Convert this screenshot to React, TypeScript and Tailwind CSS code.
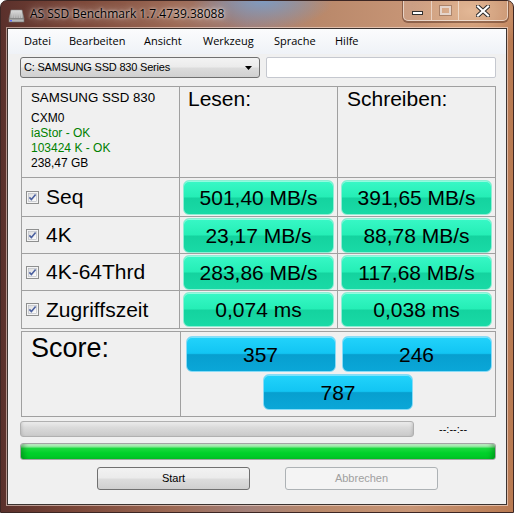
import React from 'react';

const ARIAL = "font-['Liberation_Sans',Arial,sans-serif]";
const UI = "font-['Open_Sans','Noto_Sans',sans-serif]";

const TONES = {
  green:
    "border-[#8eeed4] bg-[linear-gradient(180deg,#38f8c6_0%,#25eeb6_48%,#14d39f_52%,#19daa6_100%)] shadow-[inset_0_1px_0_rgba(255,255,255,0.45)]",
  blue:
    "border-[#88dbf6] bg-[linear-gradient(180deg,#22d3fb_0%,#12c5f3_48%,#079fcf_52%,#0aa7d8_100%)] shadow-[inset_0_1px_0_rgba(255,255,255,0.4)]",
};

const ResultBox: React.FC<{ value: string; tone: 'green' | 'blue'; className?: string }> = ({ value, tone, className }) => (
  <div
    className={`flex items-center justify-center rounded-[6px] border text-[21px] text-black ${ARIAL} ${TONES[tone]} ${className ?? ''}`}
  >
    <span className="pt-[1px]">{value}</span>
  </div>
);

const CheckBox: React.FC = () => (
  <svg width="13" height="13" viewBox="0 0 13 13" className="shrink-0">
    <defs>
      <linearGradient id="cb" x1="0" y1="0" x2="1" y2="1">
        <stop offset="0" stopColor="#dcdcdc" />
        <stop offset="1" stopColor="#ffffff" />
      </linearGradient>
    </defs>
    <rect x="0.5" y="0.5" width="12" height="12" fill="#f4f4f4" stroke="#8e8f8f" />
    <rect x="2.5" y="2.5" width="8" height="8" fill="url(#cb)" stroke="#b5b8c0" strokeWidth="0.6" />
    <path d="M3.4 6.4 L5.4 8.6 L9.6 3.6" fill="none" stroke="#4c61a0" strokeWidth="1.6" />
  </svg>
);

const DriveIcon: React.FC = () => (
  <svg width="17" height="16" viewBox="0 0 17 16">
    <defs>
      <linearGradient id="dv" x1="0" y1="0" x2="0" y2="1">
        <stop offset="0" stopColor="#e8e8e8" />
        <stop offset="1" stopColor="#9a9a9a" />
      </linearGradient>
    </defs>
    <path d="M3 2 H14 L16 11 H1 Z" fill="url(#dv)" stroke="#7a7a7a" strokeWidth="0.6" />
    <rect x="1" y="11" width="15" height="3" fill="#b8b8b8" stroke="#707070" strokeWidth="0.6" />
    <path d="M5 3 L4 10 M7 3 L6.6 10 M9 3 L9 10 M11 3 L11.6 10 M13 3 L13.6 10" stroke="#c8c8c8" strokeWidth="0.8" />
    <rect x="2" y="12" width="2" height="1.4" fill="#5a6cff" />
  </svg>
);

const rows = [
  { label: 'Seq', read: '501,40 MB/s', write: '391,65 MB/s', h: 'h-[39px]' },
  { label: '4K', read: '23,17 MB/s', write: '88,78 MB/s', h: 'h-[37px]' },
  { label: '4K-64Thrd', read: '283,86 MB/s', write: '117,68 MB/s', h: 'h-[37px]' },
  { label: 'Zugriffszeit', read: '0,074 ms', write: '0,038 ms', h: 'h-[38px]' },
];

const menu = [
  { label: 'Datei', w: 'w-[45px]' },
  { label: 'Bearbeiten', w: 'w-[75px]' },
  { label: 'Ansicht', w: 'w-[59px]' },
  { label: 'Werkzeug', w: 'w-[71px]' },
  { label: 'Sprache', w: 'w-[61px]' },
  { label: 'Hilfe', w: 'w-[40px]' },
];

export default function App() {
  return (
    <div className="flex h-[513px] w-[514px] flex-col overflow-hidden rounded-t-[7px] border border-[#3c2623] bg-[radial-gradient(ellipse_70px_28px_at_262px_0px,#7f9bc0,rgba(127,155,192,0)),radial-gradient(ellipse_60px_40px_at_470px_10px,#e0b08a,rgba(224,176,138,0)),linear-gradient(90deg,#5a302b_0%,#7a4638_14%,#9d6a55_34%,#a27f78_48%,#b9886a_62%,#c79576_80%,#b97a52_100%)]">
      {/* title bar */}
      <div className="flex h-[27px] shrink-0 items-start">
        <div className="mt-[7px] ml-[7px]">
          <DriveIcon />
        </div>
        <div className={`mt-[5px] ml-[5px] text-[12px] leading-[16px] text-black ${UI} [text-shadow:0_0_8px_rgba(255,255,255,0.9),0_0_3px_rgba(255,255,255,0.9)]`}>
          AS SSD Benchmark 1.7.4739.38088
        </div>
        <div className="mr-[5px] ml-auto flex h-[20px] rounded-b-[5px] border border-t-0 border-[rgba(255,255,255,0.55)] bg-[rgba(255,255,255,0.1)] shadow-[0_1px_0_1px_rgba(70,35,25,0.45)]">
          <div className="flex w-[28px] items-center justify-center border-r border-[rgba(255,255,255,0.5)]">
            <div className="mt-[4px] h-[4px] w-[11px] border border-[#33302e] bg-white" />
          </div>
          <div className="flex w-[27px] items-center justify-center border-r border-[rgba(255,255,255,0.5)]">
            <div className="h-[9px] w-[11px] border-2 border-[rgba(230,220,215,0.85)] shadow-[0_0_0_1px_rgba(90,60,50,0.35)]" />
          </div>
          <div className="flex w-[48px] items-center justify-center">
            <svg width="14" height="12" viewBox="0 0 14 12">
              <path d="M2 1.5 L12 10.5 M12 1.5 L2 10.5" stroke="#2f2d2c" strokeWidth="4.2" strokeLinecap="square" />
              <path d="M2 1.5 L12 10.5 M12 1.5 L2 10.5" stroke="#ffffff" strokeWidth="2.2" strokeLinecap="square" />
            </svg>
          </div>
        </div>
      </div>

      {/* client area */}
      <div className="mx-[6px] flex h-[477px] shrink-0 flex-col border border-[#3b3330] bg-[#f0f0f0] shadow-[0_0_0_1px_rgba(255,235,225,0.55)]">
        {/* menu */}
        <div className={`flex h-[25px] shrink-0 items-center bg-[linear-gradient(180deg,#fbfcfd,#eff2f7)] pl-[16px] text-[11px] text-black ${UI}`}>
          {menu.map((m) => (
            <div key={m.label} className={m.w}>
              {m.label}
            </div>
          ))}
        </div>

        {/* drive selection */}
        <div className="mt-[3px] flex h-[21px] shrink-0 pl-[12px]">
          <div className={`flex w-[240px] items-center rounded-[3px] border border-[#707070] bg-[linear-gradient(180deg,#f3f3f3_0%,#ebebeb_48%,#dcdcdc_52%,#d0d0d0_100%)] pl-[3px] text-[11px] text-black ${ARIAL}`}>
            <span className="tracking-[-0.2px]">C: SAMSUNG SSD 830 Series</span>
            <svg width="8" height="4" viewBox="0 0 8 4" className="mr-[6px] ml-auto">
              <path d="M0 0 H7 L3.5 4 Z" fill="#000" />
            </svg>
          </div>
          <div className="ml-[6px] w-[230px] rounded-[2px] border border-[#c5c8cf] bg-white" />
        </div>

        {/* results table */}
        <div className={`mt-[8px] ml-[13px] w-[475px] shrink-0 border-t border-l border-[#a0a0a0] ${ARIAL}`}>
          <div className="flex h-[91px]">
            <div className="w-[158px] border-r border-b border-[#a0a0a0] pt-[3px] pl-[9px] text-black">
              <div className="mb-[6px] text-[13.3px] leading-[15px]">SAMSUNG SSD 830</div>
              <div className="text-[12px] leading-[15px]">CXM0</div>
              <div className="text-[12px] leading-[15px] text-[#008000]">iaStor - OK</div>
              <div className="text-[12px] leading-[15px] text-[#008000]">103424 K - OK</div>
              <div className="text-[12px] leading-[15px]">238,47 GB</div>
            </div>
            <div className="w-[158px] border-r border-b border-[#a0a0a0] pl-[8px] text-[21px] leading-[24px] text-black">
              Lesen:
            </div>
            <div className="w-[158px] border-r border-b border-[#a0a0a0] pl-[9px] text-[21px] leading-[24px] text-black">
              Schreiben:
            </div>
          </div>
          {rows.map((r) => (
            <div key={r.label} className={`flex ${r.h}`}>
              <div className="flex w-[158px] items-center gap-[7px] border-r border-b border-[#a0a0a0] pl-[4px] text-[21px] text-black">
                <CheckBox />
                <span>{r.label}</span>
              </div>
              <div className="flex w-[158px] items-center border-r border-b border-[#a0a0a0] px-[3px]">
                <ResultBox value={r.read} tone="green" className="h-[35px] w-full" />
              </div>
              <div className="flex w-[158px] items-center border-r border-b border-[#a0a0a0] px-[3px]">
                <ResultBox value={r.write} tone="green" className="h-[35px] w-full" />
              </div>
            </div>
          ))}
        </div>

        {/* score */}
        <div className={`mt-[2px] ml-[13px] flex h-[86px] w-[475px] shrink-0 border border-[#a0a0a0] ${ARIAL}`}>
          <div className="w-[159px] border-r border-[#a0a0a0] pt-[1px] pl-[9px] text-[27px] leading-[31px] text-black">
            Score:
          </div>
          <div className="flex flex-1 flex-col items-center pt-[4px]">
            <div className="flex gap-[6px] pl-[1px]">
              <ResultBox value="357" tone="blue" className="h-[36px] w-[150px]" />
              <ResultBox value="246" tone="blue" className="h-[36px] w-[150px]" />
            </div>
            <ResultBox value="787" tone="blue" className="mt-[2px] h-[36px] w-[150px]" />
          </div>
        </div>

        {/* progress */}
        <div className="mt-[4px] flex h-[16px] shrink-0 items-center pl-[12px]">
          <div className="h-full w-[394px] rounded-[3px] border border-[#b0b0b0] bg-[linear-gradient(180deg,#ececec_0%,#dadada_40%,#cacaca_100%)] shadow-[inset_3px_0_3px_-2px_rgba(0,0,0,0.12),inset_-3px_0_3px_-2px_rgba(0,0,0,0.12)]" />
          <div className={`ml-[25px] text-[11px] text-black ${ARIAL}`}>--:--:--</div>
        </div>
        <div className="mt-[6px] ml-[12px] h-[17px] w-[476px] shrink-0 rounded-[3px] border border-[#a4a4a4] bg-[linear-gradient(180deg,#c9f6cf_0%,#a8eeb2_14%,#1bd93e_30%,#00d12a_60%,#00c828_100%)] shadow-[inset_6px_0_5px_-3px_rgba(0,70,10,0.35),inset_-6px_0_5px_-3px_rgba(0,70,10,0.35)]" />

        {/* buttons */}
        <div className={`mt-[7px] flex h-[23px] shrink-0 pl-[89px] text-[11px] ${ARIAL}`}>
          <div className="flex w-[153px] items-center justify-center rounded-[3px] border border-[#707070] bg-[linear-gradient(180deg,#f2f2f2_0%,#ebebeb_48%,#dddddd_52%,#cfcfcf_100%)] text-black">
            Start
          </div>
          <div className="ml-[35px] flex w-[153px] items-center justify-center rounded-[3px] border border-[#adb2b5] bg-[#f4f4f4] text-[#a0a0a0]">
            Abbrechen
          </div>
        </div>
      </div>
    </div>
  );
}
